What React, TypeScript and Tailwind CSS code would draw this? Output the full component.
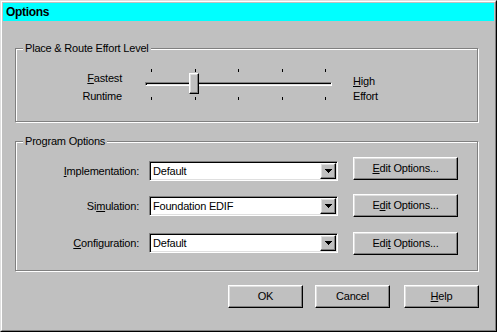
import React from "react";

const raised =
  "border border-t-white border-l-white border-b-black border-r-black shadow-[inset_-1px_-1px_0_#808080,inset_1px_1px_0_#dfdfdf] bg-[#c0c0c0]";
const sunken =
  "border border-t-[#808080] border-l-[#808080] border-b-white border-r-white shadow-[inset_1px_1px_0_#000,inset_-1px_-1px_0_#dfdfdf]";
const etched = "relative border border-[#808080] shadow-[inset_1px_1px_0_#fff,1px_1px_0_#fff]";

const programRows = [
  { pre: "", key: "I", post: "mplementation:", value: "Default", bPre: "", bKey: "E", bPost: "dit Options...", comboTop: "mt-[4px]", rowTop: "mt-0" },
  { pre: "Si", key: "m", post: "ulation:", value: "Foundation EDIF", bPre: "E", bKey: "d", bPost: "it Options...", comboTop: "mt-[2px]", rowTop: "mt-[14px]" },
  { pre: "", key: "C", post: "onfiguration:", value: "Default", bPre: "Edi", bKey: "t", bPost: " Options...", comboTop: "mt-[1px]", rowTop: "mt-[15px]" },
];

function Key({ children }: { children: React.ReactNode }) {
  return <u className="underline decoration-1 underline-offset-[1px]">{children}</u>;
}

function Button({ children, className = "" }: { children: React.ReactNode; className?: string }) {
  return (
    <button className={`${raised} h-[23px] flex items-center justify-center leading-[13px] text-black ${className}`}>
      <span>{children}</span>
    </button>
  );
}

function ArrowDown() {
  return (
    <svg width="7" height="4" viewBox="0 0 7 4" shapeRendering="crispEdges">
      <rect x="0" y="0" width="7" height="1" fill="#000" />
      <rect x="1" y="1" width="5" height="1" fill="#000" />
      <rect x="2" y="2" width="3" height="1" fill="#000" />
      <rect x="3" y="3" width="1" height="1" fill="#000" />
    </svg>
  );
}

function Combo({ value, className = "" }: { value: string; className?: string }) {
  return (
    <div className={`${sunken} bg-white w-[189px] h-[20px] p-px flex ${className}`}>
      <div className="flex-1 pl-[2px] flex items-center leading-[13px]">{value}</div>
      <div className={`${raised} w-[16px] h-[16px] flex items-center justify-center`}>
        <ArrowDown />
      </div>
    </div>
  );
}

function Slider() {
  return (
    <div className="relative w-[187px] h-[31px]">
      {/* ticks top */}
      <div className="absolute left-0 right-0 top-0 flex justify-between px-[6px]">
        {[0, 1, 2, 3, 4].map((i) => (
          <div key={i} className="w-px h-[3px] bg-black" />
        ))}
      </div>
      {/* track */}
      <div className="absolute left-0 right-0 top-[13px] h-[4px] border border-t-[#808080] border-l-[#808080] border-b-white border-r-white shadow-[inset_1px_1px_0_#000,inset_-1px_-1px_0_#dfdfdf]" />
      {/* thumb */}
      <div className={`${raised} absolute left-[44px] top-[4px] w-[10px] h-[21px]`} />
      {/* ticks bottom */}
      <div className="absolute left-0 right-0 top-[28px] flex justify-between px-[6px]">
        {[0, 1, 2, 3, 4].map((i) => (
          <div key={i} className="w-px h-[3px] bg-black" />
        ))}
      </div>
    </div>
  );
}

export default function App() {
  return (
    <div className="w-[497px] h-[332px] bg-[#c0c0c0] text-black text-[11px] tracking-[-0.2px] font-['Liberation_Sans',Arial,sans-serif] border border-t-[#dfdfdf] border-l-[#dfdfdf] border-b-black border-r-black">
      <div className="w-full h-full border border-t-white border-l-white border-b-[#808080] border-r-[#808080] p-px flex flex-col">
        {/* title bar */}
        <div className="h-[18px] bg-[#00ffff] flex items-center pl-[3px]">
          <span className="font-bold text-[12px] tracking-[-0.3px] leading-[14px]">Options</span>
        </div>

        {/* effort level */}
        <div className={`${etched} mt-[27px] ml-[12px] w-[463px] h-[74px]`}>
          <div className="absolute left-[7px] top-[-7px] px-[2px] bg-[#c0c0c0] leading-[12px]">
            Place &amp; Route Effort Level
          </div>
          <div className="flex pt-[20px]">
            <div className="w-[106px] text-right leading-[18px]">
              <div>
                <Key>F</Key>astest
              </div>
              <div>Runtime</div>
            </div>
            <div className="ml-[23px]">
              <Slider />
            </div>
            <div className="ml-[21px] mt-[5px] leading-[15px]">
              <div>
                <Key>H</Key>igh
              </div>
              <div>Effort</div>
            </div>
          </div>
        </div>

        {/* program options */}
        <div className={`${etched} mt-[19px] ml-[12px] w-[463px] h-[130px]`}>
          <div className="absolute left-[7px] top-[-7px] px-[2px] bg-[#c0c0c0] leading-[12px]">
            Program Options
          </div>
          <div className="flex flex-col pt-[15px]">
            {programRows.map((r, idx) => (
              <div key={idx} className={`flex items-start h-[23px] ${r.rowTop}`}>
                <div className={`flex items-center ${r.comboTop}`}>
                  <div className="w-[123px] text-right leading-[13px]">
                    {r.pre}
                    <Key>{r.key}</Key>
                    {r.post}
                  </div>
                  <Combo value={r.value} className="ml-[10px]" />
                </div>
                <Button className="ml-[15px] w-[105px]">
                  {r.bPre}
                  <Key>{r.bKey}</Key>
                  {r.bPost}
                </Button>
              </div>
            ))}
          </div>
        </div>

        {/* dialog buttons */}
        <div className="mt-[14px] flex justify-end mr-[15px]">
          <Button className="w-[75px]">OK</Button>
          <Button className="w-[75px] ml-[12px]">Cancel</Button>
          <Button className="w-[75px] ml-[14px]">
            <Key>H</Key>elp
          </Button>
        </div>
      </div>
    </div>
  );
}
